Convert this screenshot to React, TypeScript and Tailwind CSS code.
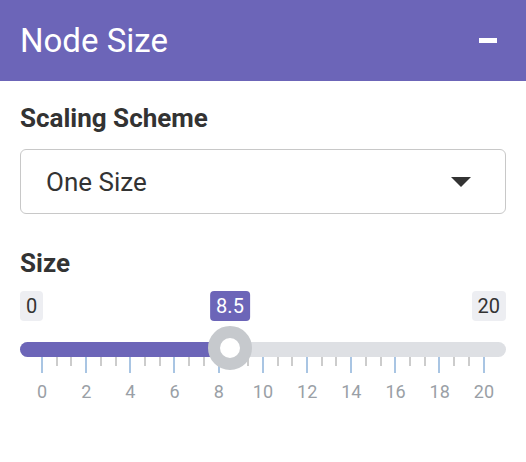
import React from "react";

const ticks = Array.from({ length: 31 }, (_, i) => i);
const tickLabels = [0, 2, 4, 6, 8, 10, 12, 14, 16, 18, 20];

export default function App() {
  return (
    <div className="w-[526px] h-[462px] bg-white font-['Roboto',sans-serif] text-[#333]">
      <header className="h-[81px] bg-[#6c65b8] pl-[20px] pr-[29px] flex items-center justify-between">
        <span className="text-[33px] leading-none text-white">Node Size</span>
        <div className="w-[18px] h-[5px] bg-white" />
      </header>

      <div className="px-[20px] pt-[22px]">
        <div className="text-[26px] leading-[30px] font-bold">Scaling Scheme</div>

        <div className="mt-[16px] h-[65px] border border-[#c8c8c8] rounded-[6px] pl-[25px] pr-[34px] flex items-center justify-between">
          <span className="text-[26px] leading-none">One Size</span>
          <svg width="20" height="10" viewBox="0 0 20 10">
            <path d="M0 0h20L10 10z" fill="#333" />
          </svg>
        </div>

        <div className="mt-[34px] text-[26px] leading-[30px] font-bold">Size</div>

        <div className="relative mt-[13px]">
          <div className="flex justify-between h-[30px]">
            <span className="h-[30px] px-[6px] rounded-[4px] bg-[#edeef2] text-[20px] leading-[30px]">0</span>
            <span className="h-[30px] px-[6px] rounded-[4px] bg-[#edeef2] text-[20px] leading-[30px]">20</span>
          </div>

          <div className="mt-[21px] h-[15px] rounded-full bg-[#dee0e4] flex">
            <div className="w-[210px] h-full rounded-full bg-[#6c65b8]" />
          </div>

          <div className="px-[21px] h-[16px] flex justify-between items-start">
            {ticks.map((i) =>
              i % 3 === 0 ? (
                <div key={i} className="w-[2px] h-[16px] bg-[#a9c5e3]" />
              ) : (
                <div key={i} className="w-[2px] h-[9px] bg-[#cccccc]" />
              )
            )}
          </div>

          <div className="mt-[9px] px-[21px] flex justify-between">
            {tickLabels.map((n) => (
              <div key={n} className="w-[2px] flex justify-center">
                <span className="whitespace-nowrap text-[18px] leading-[20px] text-[#9a9fa6]">{n}</span>
              </div>
            ))}
          </div>

          <span className="absolute top-0 left-[210px] -translate-x-1/2 h-[30px] px-[6px] rounded-[4px] bg-[#6c65b8] text-white text-[20px] leading-[30px]">
            8.5
          </span>
          <div className="absolute top-[35px] left-[188px] w-[44px] h-[44px] rounded-full border-[12px] border-[#c6c9cd] bg-white" />
        </div>
      </div>
    </div>
  );
}
